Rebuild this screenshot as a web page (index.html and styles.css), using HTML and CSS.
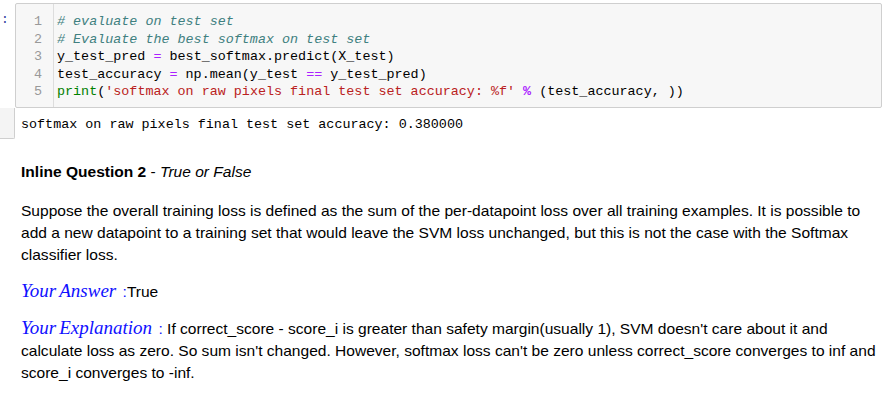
FILE: index.html
```html
<!DOCTYPE html>
<html>
<head>
<meta charset="utf-8">
<link rel="stylesheet" href="styles.css">
</head>
<body>
<div class="cell">
  <div class="prompt">:</div>
  <div class="input">
    <div class="gutter">
      <div>1</div><div>2</div><div>3</div><div>4</div><div>5</div>
    </div>
    <div class="code">
      <div class="line"><span class="c"># evaluate on test set</span></div>
      <div class="line"><span class="c"># Evaluate the best softmax on test set</span></div>
      <div class="line">y_test_pred <span class="o">=</span> best_softmax.predict(X_test)</div>
      <div class="line">test_accuracy <span class="o">=</span> np.mean(y_test <span class="o">==</span> y_test_pred)</div>
      <div class="line"><span class="k">print</span>(<span class="s">'softmax on raw pixels final test set accuracy: %f'</span> <span class="o b">%</span> (test_accuracy, ))</div>
    </div>
  </div>
</div>
<div class="output">
  <div class="out-prompt"></div>
  <div class="out-text">softmax on raw pixels final test set accuracy: 0.380000</div>
</div>
<div class="md">
  <p class="q"><b>Inline Question 2</b> - <i>True or False</i></p>
  <p class="para">Suppose the overall training loss is defined as the sum of the per-datapoint loss over all training examples. It is possible to add a new datapoint to a training set that would leave the SVM loss unchanged, but this is not the case with the Softmax classifier loss.</p>
  <p class="ans"><span class="math">Your<span class="sp"></span>Answer</span> <span class="colon">:</span>True</p>
  <p class="para expl"><span class="math">Your<span class="sp"></span>Explanation</span> <span class="colon">:</span> If correct_score - score_i is greater than safety margin(usually 1), SVM doesn't care about it and calculate loss as zero. So sum isn't changed. However, softmax loss can't be zero unless correct_score converges to inf and score_i converges to -inf.</p>
</div>
</body>
</html>
```
FILE: styles.css
```css
html, body { margin: 0; padding: 0; background: #fff; }
body { width: 891px; font-family: "Liberation Sans", Arial, sans-serif; color: #000; }

.cell { display: flex; padding-top: 3px; }
.prompt { width: 15px; color: #303f9f; font-family: "Liberation Mono", monospace; font-size: 13px; padding-top: 9px; text-indent: 1px; }
.input {
  flex: 1; margin-right: 9px; display: flex;
  background: #f7f7f7; border: 1px solid #cfcfcf; border-radius: 2px;
  font-family: "Liberation Mono", monospace; font-size: 13.4px; line-height: 17.5px;
}
.gutter { width: 26px; padding: 9px 11px 6px 0; text-align: right; color: #999; border-right: 1px solid #ddd; }
.code { padding: 9px 0 6px 3px; color: #000; }
.line { white-space: pre; }
.c { color: #408080; font-style: italic; }
.o { color: #aa22ff; }
.b { font-weight: bold; }
.k { color: #008000; }
.s { color: #ba2121; }

.output { display: flex; align-items: flex-start; }
.out-prompt { width: 14px; height: 30px; background: #f4f4f4; border-right: 1px solid #cfcfcf; border-bottom: 1px solid #cfcfcf; border-radius: 0 0 2px 0; }
.out-text { padding: 8px 0 0 6px; font-family: "Liberation Mono", monospace; font-size: 13.4px; line-height: 17px; white-space: pre; }

.md { padding: 0 10px 0 21px; font-size: 15.55px; line-height: 22px; }
.md p { margin: 0; }
.q { margin-top: 22px !important; }
.para { margin-top: 17px !important; }
.ans { margin-top: 14px !important; }
.expl { margin-top: 14px !important; }
.math { font-family: "Liberation Serif", "Times New Roman", serif; font-style: italic; color: #1010ff; font-size: 19px; }
.sp { display: inline-block; width: 3px; }
.colon { color: #1010ff; margin-left: 2px; }
```
